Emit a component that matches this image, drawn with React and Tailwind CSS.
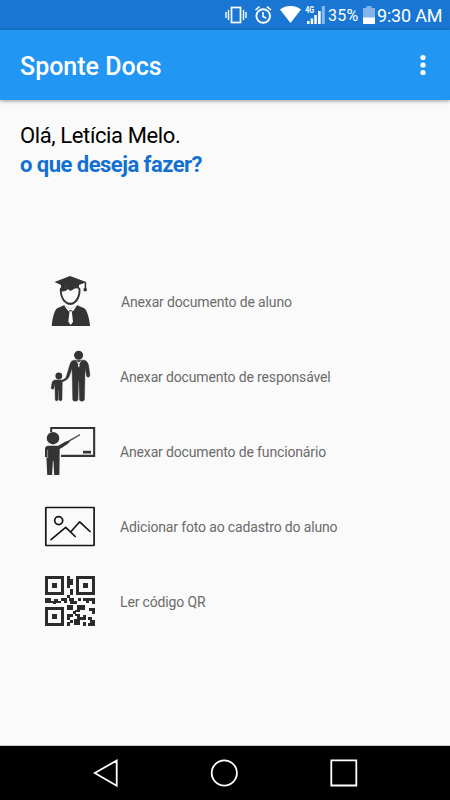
const StudentIcon = () => (
  <svg viewBox="0 2 60 60" className="-mt-px h-[60px] w-[60px]" fill="#343434">
    <path d="M14.5 12 30 6l16.2 6v6.2h.6v3h-3.2v-3h1v-5.4L39 14.9v3.4c-5-2.6-13-2.6-18 0v-3.4z" />
    <path d="M20 18c-1.2 6 2.600 16.900 10.300 16.900S41.600 24 40.200 18C36 15.400 25 15.400 20 18z" />
    <path fill="#fafafa" d="M21.800 21.300c2.200.6 4.400-.4 6.200-2.300 1.300 2.200 3.500 2.300 5.500.3 1.300-1.200 3.500-1.500 5-.6.7 5.800-2.500 14-8.200 14-5.200 0-8.500-6-8.500-11.400z" />
    <path d="M24 35.200 17.200 38.200c-3 1.600-5.300 12.500-5.400 17.800h38.200c-.2-5.400-2.700-16-5.700-17.700L37.300 35.200 30.700 39z" />
    <path fill="#fafafa" d="m24 35.200 6.700 3.900 6.500-3.900-4.300 6.300-1-1.300h-2.400l-1 1.400zM29.500 41.200h2.300l1.200 10.600-2.300 3.300-2.400-3.300z" />
  </svg>
);

const GuardianIcon = () => (
  <svg viewBox="0 2 60 60" className="-mt-px h-[60px] w-[60px]" fill="#343434">
    <circle cx="38.600" cy="10.300" r="4.500" />
    <circle cx="18.800" cy="31" r="3.400" />
    <path d="M34 15.200h10c2.500 0 4 2.600 4.600 5.300l1.300 9c.3 3-2.600 3.600-3.400 1.200l-1.300-7.700-.3 9.500-.4 22c-.1 2.200-5 2.200-5.100 0l-.4-18.500h-.6L38 54.500c-.1 2.200-5.100 2.200-5.300 0L32 23.500l-2.500 7.300c-.8 2.800-2.800 4.300-5.700 5.500l-1.500.7-.3 17.500c-.1 1.800-2.900 1.800-3 0l-.2-9.500h-.4l-.2 9.500c-.1 1.800-2.900 1.800-3 0l-.3-16-1 4.900c-.7 1.400-3 1-2.700-.9l.9-5c.5-1.800 1.500-2.600 3.300-2.600h6.300c2.400-.4 4.300-1.800 4.800-4l3-10.200c.8-3.400 2.200-5.500 4.500-5.500z" stroke="#343434" strokeWidth=".4" />
    <path fill="#fafafa" d="m36 15.200 2.800 2.200 2.700-2.200-2.700 4.700zM38.400 18h.9l.3 3-.8 1.400-.8-1.400z" />
  </svg>
);

const TeacherIcon = () => (
  <svg viewBox="0 2 60 60" className="-mt-px h-[60px] w-[60px]" fill="#343434">
    <path d="M10.200 6.900h45v30H21v-2.200h32.100V9.100H12.200V12h-2z" />
    <path d="M43 30.800h8v2.700h-8z" />
    <circle cx="13" cy="18.200" r="6.200" />
    <path d="M8.500 25.700h9.700l7.500-4.200 3.600-1 .4 1.600-2.800 2.400-6.200 3.900-1 .4L19.400 55h-5.200l-.8-14h-.5l-.8 14H7.200L6.400 37H5V28.600c.2-1.800 1.500-2.900 3.500-2.900z" />
    <path d="m28.600 20.700 11-6.300.4.700-11 6.500z" stroke="#343434" strokeWidth=".5" />
    <path d="M7.600 30v8" stroke="#fafafa" strokeWidth=".5" />
  </svg>
);

const PhotoIcon = () => (
  <svg viewBox="0 0 60 60" className="-mt-px h-[60px] w-[60px]" fill="none" stroke="#151515" strokeWidth="1.700" strokeLinecap="round" strokeLinejoin="round">
    <rect x="5.800" y="10.500" width="48.300" height="38" rx=".5" />
    <circle cx="18.700" cy="23.600" r="4" />
    <path d="m11 42.700 14.700-12.400L35.200 39.500M30.800 34.800l8.900-10 10.300 9.700" />
  </svg>
);

const finders = [[5, 5], [36, 5], [5, 36]];

const QrIcon = () => (
  <svg viewBox="0 1 60 60" className="-mt-px h-[60px] w-[60px]" fill="#2b2b2b" shapeRendering="crispEdges">
    {finders.map(([x, y]) => (
      <g key={`${x}-${y}`}>
        <path fillRule="evenodd" d={`M${x} ${y}h19v19h-19zM${x + 3} ${y + 3}v13h13v-13z`} />
        <path d={`M${x + 7} ${y + 7}h5v5h-5z`} />
      </g>
    ))}
    <path d="M27 5h3v3h3v6h-3v3h-3zM30 18h3v6h-3zM27 24h3v3h-3z" />
    <path d="M5 27h6v3h3v-2h4v2h3v-3h6v5h-3v-2h-3v2h-5v1h-3v-1H5zM29 27h5v3h3v3h-7v-3h-1zM38 27h3v3h-3zM43 27h12v6h-3v-3h-3v2h-3v-2h-3z" />
    <path d="M27 34h6v5h-6zM37 34h8v5h-5v2h-5v-2h2zM49 37h6v6h-3v-3h-3zM33 40h3v3h-3zM27 43h6v3h-3v3h-3zM35 43h5v11h-6v-6h3v-3h-2zM40 46h3v3h-3zM43 44h3v5h-3zM48 46h4v3h3v6h-7v-3h2v-3h-2zM27 51h3v4h-3zM30 49h3v3h-3zM43 51h3v4h-3z" />
  </svg>
);

const actions = [
  { label: 'Anexar documento de aluno', icon: StudentIcon, pad: 'pl-[21px]' },
  { label: 'Anexar documento de responsável', icon: GuardianIcon, pad: 'pl-5' },
  { label: 'Anexar documento de funcionário', icon: TeacherIcon, pad: 'pl-5' },
  { label: 'Adicionar foto ao cadastro do aluno', icon: PhotoIcon, pad: 'pl-5' },
  { label: 'Ler código QR', icon: QrIcon, pad: 'pl-5' },
];

const StatusBar = () => (
  <div className="flex h-[30px] shrink-0 items-center bg-[#1976d2] text-white">
    <svg viewBox="220 0 108 30" className="ml-[220px] h-[30px] w-[108px] shrink-0" fill="none" stroke="#fff">
      <rect x="231.500" y="7.500" width="9" height="15" strokeWidth="1.700" />
      <path d="M228.500 10v10M226 12v6M243.500 10v10M246 12v6" strokeWidth="1.400" />
      <circle cx="263.200" cy="16" r="6.800" strokeWidth="1.900" />
      <path d="M263 12v4.500l3.300 1.800M255.500 10l4-3.300M267 6.700l4 3.300" strokeWidth="1.600" />
      <path d="M280 9.500c6-4.600 15-4.600 21 0L290.500 23z" fill="#fff" stroke="none" />
      <path d="M307 21h2.500v3H307zM310.700 18.500h2.500V24h-2.500zM314.300 15h2.500v9h-2.500zM318 11h2.700v13H318z" fill="#fff" stroke="none" />
      <path d="M321.800 6h3v18h-3z" fill="#8dbbe9" stroke="none" />
      <text x="305.200" y="13" fill="#fff" stroke="none" className="font-[Roboto,sans-serif] text-[9px] font-bold" textLength="9" lengthAdjust="spacingAndGlyphs">4G</text>
    </svg>
    <span className="w-[35px] pt-px text-[16px] leading-[30px] tracking-[0.2px]">35%</span>
    <svg viewBox="0 0 12 20" className="-mt-px h-5 w-3 shrink-0">
      <path d="M3.500 1h5v2H12v16H0V3h3.500z" fill="#83b5e8" />
      <path d="M0 12.500h12V19H0z" fill="#fff" />
    </svg>
    <span className="ml-[2px] whitespace-nowrap pt-px text-[18px] leading-[30px] tracking-[-0.2px]">9:30 AM</span>
  </div>
);

const AppBar = () => (
  <header className="z-10 flex h-[70px] shrink-0 items-center justify-between bg-[#2196f3] pl-5 pr-[24px] pt-[3px] text-white shadow-[0_1px_4px_rgba(0,0,0,0.4)]">
    <h1 className="text-[25px] font-medium leading-none">Sponte Docs</h1>
    <svg viewBox="0 0 6 22" className="mb-[3px] h-[22px] w-[6px]" fill="#fff">
      <circle cx="3" cy="3.500" r="2.600" />
      <circle cx="3" cy="11" r="2.600" />
      <circle cx="3" cy="18.500" r="2.600" />
    </svg>
  </header>
);

const NavBar = () => (
  <nav className="h-[55px] shrink-0 border-t border-[#c5cec5] bg-black">
    <svg viewBox="0 746 450 54" className="h-[54px] w-full" fill="none" stroke="#fff" strokeWidth="1.800">
      <path d="M94.800 773 116.700 760.500v25.200z" />
      <circle cx="224.300" cy="773" r="12.600" />
      <path d="M331.300 760.300h25v25.200h-25z" />
    </svg>
  </nav>
);

const App = () => (
  <div className="flex h-[800px] w-[450px] flex-col overflow-hidden bg-[#fafafa] font-[Roboto,sans-serif]">
    <StatusBar />
    <AppBar />
    <main className="flex-1">
      <div className="h-[165px] pl-5 pt-[21px] text-[22px] leading-[29px]">
        <p className="tracking-[-0.38px] text-black">Olá, Letícia Melo.</p>
        <p className="font-bold tracking-[-0.52px] text-[#1270d2]">o que deseja fazer?</p>
      </div>
      <ul className="pl-10">
        {actions.map(({ label, icon: Icon, pad }) => (
          <li key={label} className="flex h-[75px] items-center">
            <Icon />
            <span className={`${pad} text-[14px] tracking-[-0.15px] text-[#6b6b6b]`}>{label}</span>
          </li>
        ))}
      </ul>
    </main>
    <NavBar />
  </div>
);

export default App;
